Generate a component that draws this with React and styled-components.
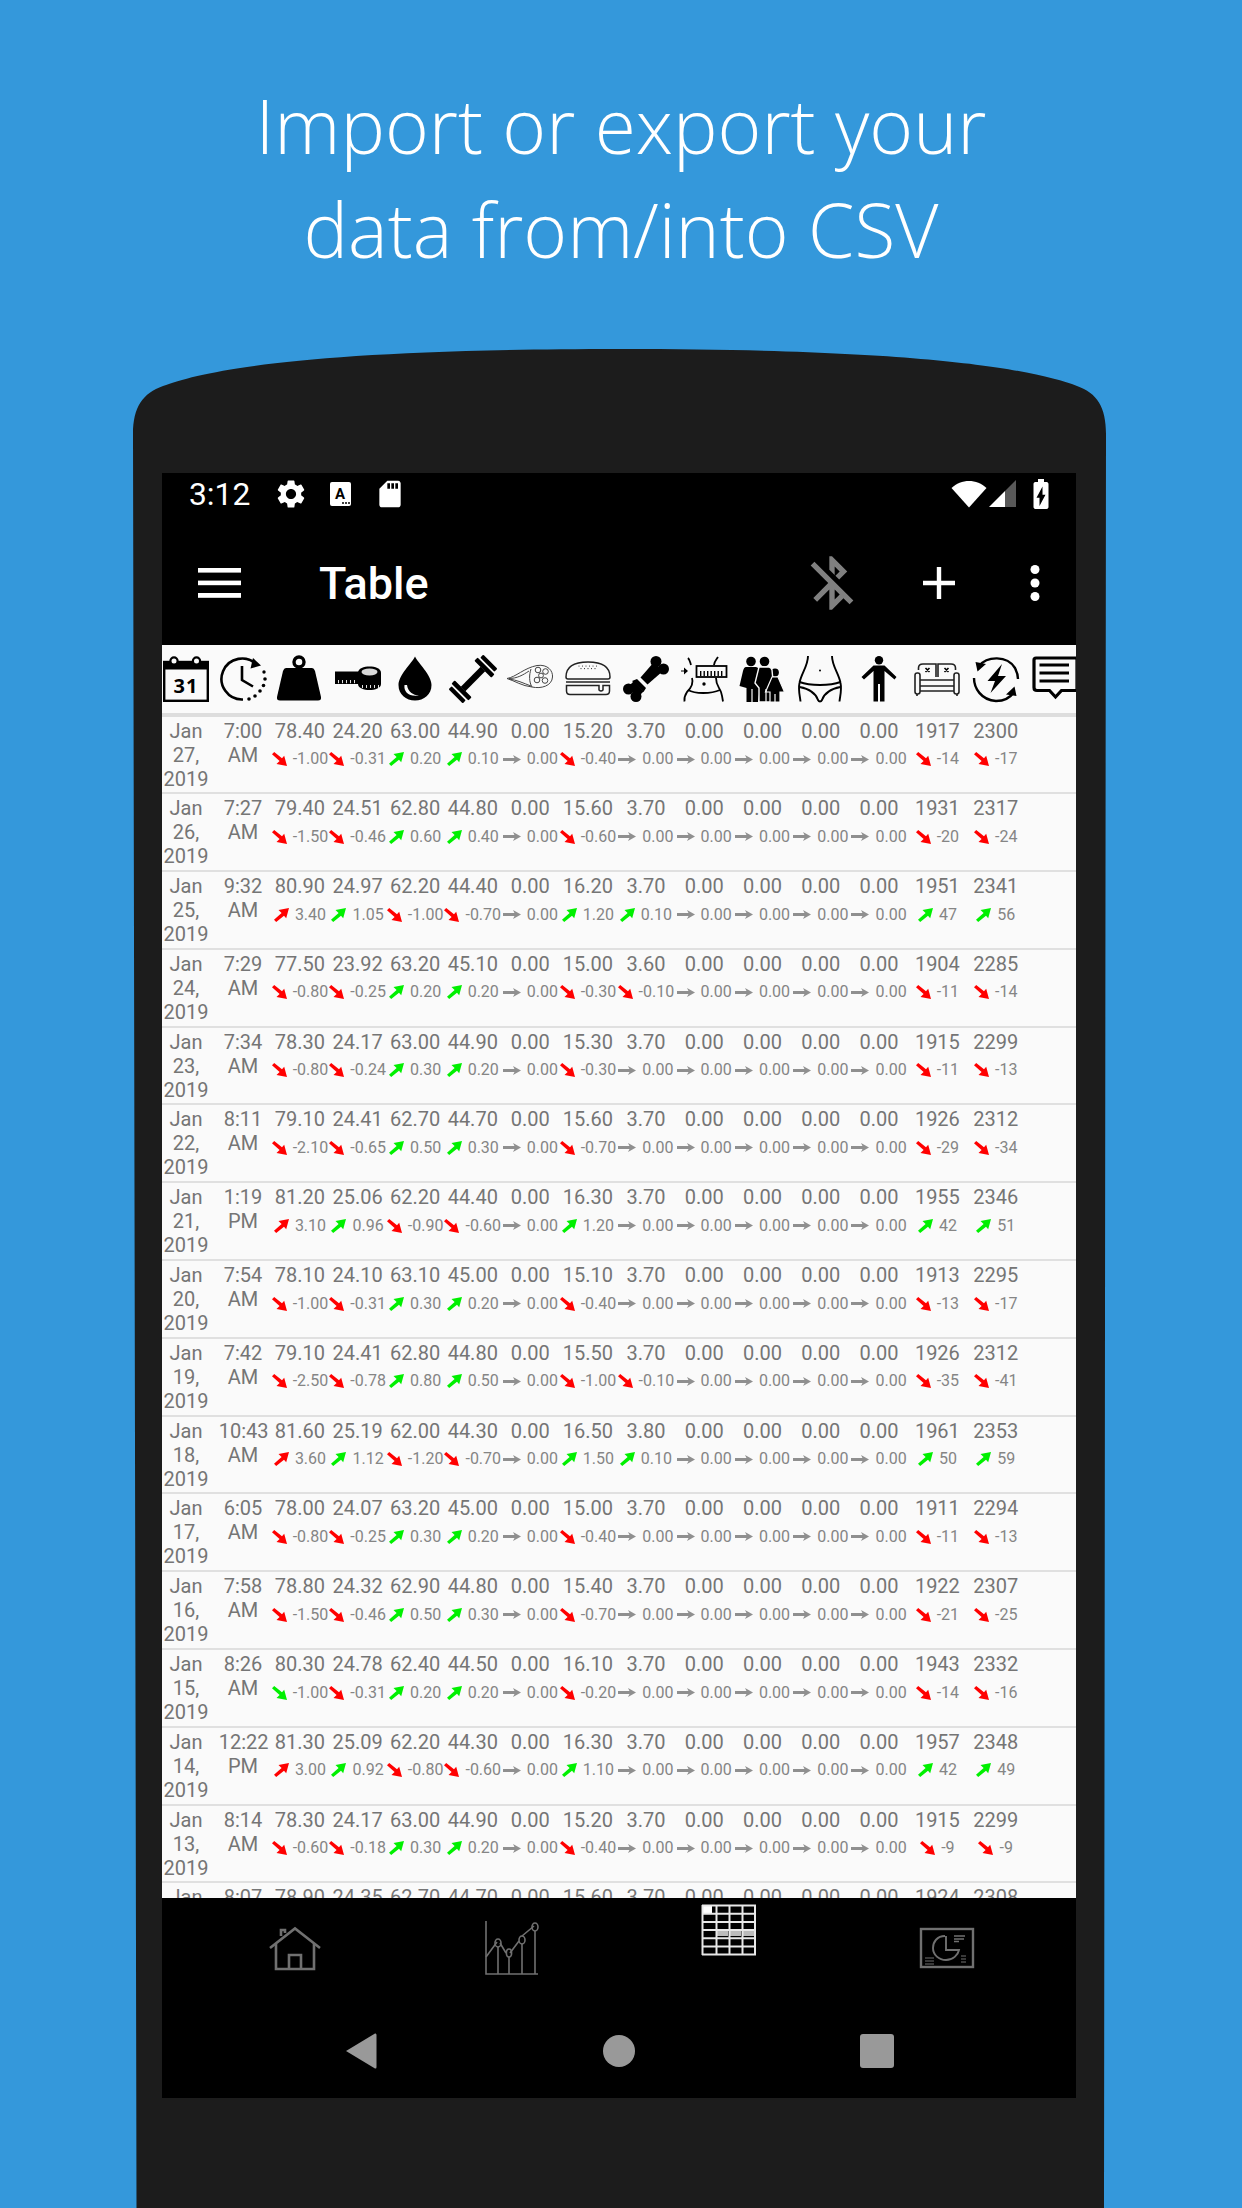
import React from 'react';
import styled, { createGlobalStyle } from 'styled-components';
import { MdSettings, MdSdStorage, MdBluetoothDisabled, MdBatteryChargingFull } from 'react-icons/md';

const GlobalStyle = createGlobalStyle`
  html, body { margin: 0; padding: 0; background: #3498db; }
  body { font-family: Roboto, "Liberation Sans", sans-serif; }
`;

const COLUMNS = '57.6px 56.4px repeat(6, 57.6px) repeat(8, 58.3px)';

const Page = styled.div`
  width: 1242px; height: 2208px; background: #3498db; overflow: hidden;
  display: flex; flex-direction: column;
`;
const Heading = styled.h1`
  margin: 0; height: 349px; box-sizing: border-box; padding-top: 74px; flex: none;
  font-family: "Open Sans", sans-serif; font-weight: 300; font-size: 74.8px; line-height: 103.5px;
  color: #fff; text-align: center;
`;
const Phone = styled.div`
  flex: none; width: 973px; height: 1859px; margin-left: 133px; padding: 124px 0 0 29px; box-sizing: border-box;
  background: #1c1c1c;
  clip-path: path('M0 85 C0 58 10 44 30 37 C70 22 170 0 487 0 C804 0 904 22 944 37 C964 44 973 58 973 85 L971 1859 L3.5 1859 Z');
`;
const Screen = styled.div`
  width: 913.5px; height: 1625px; background: #000; display: flex; flex-direction: column; overflow: hidden;
`;
const StatusBar = styled.div`
  flex: none; height: 48px; display: flex; align-items: center; padding: 0 17px 7px 27px; box-sizing: border-box; color: #fff;
`;
const Clock = styled.span`
  font-size: 31.8px; line-height: 40px; width: 85px;
`;
const StatusLeft = styled.div`display: flex; align-items: center; gap: 22px;`;
const StatusRight = styled.div`margin-left: auto; display: flex; align-items: center; gap: 2px;`;
const BatteryIcon = styled(MdBatteryChargingFull)`margin-left: 5px;`;
const AppBar = styled.div`
  flex: none; height: 124px; display: flex; align-items: center; color: #fff; padding: 0 36px 0 36px;
`;
const Title = styled.span`
  font-size: 45px; font-weight: 500; margin-left: 78px; margin-top: 1px;
`;
const Actions = styled.div`
  margin-left: auto; display: flex; align-items: center;
`;
const BluetoothIcon = styled(MdBluetoothDisabled)`margin-right: 59px;`;
const PlusSlot = styled.div`margin-right: 75px;`;
const TableArea = styled.div`
  flex: 1; min-height: 0; background: #fafafa; overflow: hidden;
`;
const HeaderRow = styled.div`
  display: grid; grid-template-columns: ${COLUMNS}; margin-left: -4.8px; height: 68px; align-items: center;
  justify-items: center; background: #fafafa;
`;
const HeaderRule = styled.div`height: 3.5px; background: #dddddd;`;
const Row = styled.div`
  display: grid; grid-template-columns: ${COLUMNS}; margin-left: -4.8px; height: 77.8px; box-sizing: border-box;
  padding-top: 2px; border-bottom: 2.6px solid #e0e0e0;
`;
const TextCell = styled.div`
  font-size: 20px; line-height: 24px; color: #757575; text-align: center; padding: 0 4px;
`;
const ValueCell = styled.div`
  display: flex; flex-direction: column; align-items: center; color: #757575;
`;
const Value = styled.div`font-size: 20px; line-height: 24px; white-space: nowrap;`;
const Delta = styled.div`
  display: flex; align-items: center; gap: 6px; font-size: 16px; line-height: 20px; margin-top: 6.5px; color: #858585; white-space: nowrap;
`;
const Tabs = styled.div`
  flex: none; height: 112px; display: grid; grid-template-columns: repeat(4, 217.3px); padding-left: 24px; justify-items: center;
`;
const Tab = styled.div`padding-top: ${p => p.$top}px;`;
const Keys = styled.div`
  flex: none; height: 88px; box-sizing: border-box; padding: 0 0 6px 70px; display: flex; align-items: center;
`;
const Key = styled.div`
  width: 258px; display: flex; justify-content: center;
`;
const KeyCircle = styled.div`width: 32px; height: 32px; border-radius: 50%; background: #999;`;
const KeySquare = styled.div`width: 34px; height: 34px; border-radius: 3px; background: #999;`;

const Svg = styled.svg`display: block; flex: none; overflow: visible;`;
const ArrowSvg = styled(Svg)`transform: ${p => (p.$up ? 'scaleY(-1)' : 'none')};`;

const Ico = ({ children }) => (
  <Svg width={46} height={46} viewBox="0 0 46 46">{children}</Svg>
);

const Calendar = () => (
  <Ico>
    <rect x="1.2" y="6" width="43.6" height="38.8" fill="#fafafa" stroke="#000" strokeWidth="2.4" />
    <rect x="1" y="5" width="44" height="8.5" fill="#000" />
    <circle cx="11" cy="5" r="3.6" fill="#fafafa" stroke="#000" strokeWidth="2.2" />
    <circle cx="33.5" cy="5" r="3.6" fill="#fafafa" stroke="#000" strokeWidth="2.2" />
    <rect x="5" y="15.5" width="36" height="25" fill="#fafafa" />
    <text x="23" y="37" textAnchor="middle" fontFamily="'Open Sans', sans-serif" fontWeight="700" fontSize="20" letterSpacing="1" fill="#000">31</text>
  </Ico>
);
const ClockIcon = () => (
  <Ico>
    <path d="M37 9 A20.5 20.5 0 1 0 23 43.5" fill="none" stroke="#000" strokeWidth="2.6" />
    <path d="M33 2 L41 9.5 L30.5 12.5 Z" fill="#000" />
    <path d="M22 10 V24 L33 30.5" fill="none" stroke="#000" strokeWidth="2.6" />
    {[[44, 16, 1.7], [45, 23, 1.8], [43.5, 29.5, 1.8], [40, 35, 1.8], [35, 40, 1.8], [29, 43, 1.8]].map(([x, y, r]) => <circle key={x + '-' + y} cx={x} cy={y} r={r} fill="#000" />)}
  </Ico>
);
const Kettle = () => (
  <Ico>
    <circle cx="22" cy="6" r="5" fill="none" stroke="#000" strokeWidth="3.4" />
    <path d="M9 12 H35 Q37 12 38 15 L44 41 Q44.5 44.5 41 44.5 H3 Q-0.5 44.5 0 41 L6 15 Q7 12 9 12 Z" fill="#000" />
  </Ico>
);
const Tape = () => (
  <Ico>
    <rect x="0" y="15.5" width="24" height="12.5" fill="#000" />
    {[3, 7, 11, 15, 19].map(x => <rect key={x} x={x} y="24" width="0.9" height="3.2" fill="#fafafa" />)}
    <path d="M23 17 C23 12 29 10.5 34.5 10.5 C40 10.5 46 12 46 17 V28 C46 32 40 34 34.5 34 C29 34 23 32 23 28 Z" fill="#000" />
    <ellipse cx="34.5" cy="16" rx="8" ry="3.4" fill="#d8d8d8" />
    {[27, 31, 35, 39, 43].map(x => <rect key={x} x={x} y="29" width="0.9" height="3" fill="#fafafa" />)}
  </Ico>
);
const Drop = () => (
  <Ico>
    <path d="M23 0.5 C26 7 39.5 19 39.5 29 C39.5 38.5 32 44.5 23 44.5 C14 44.5 6.5 38.5 6.5 29 C6.5 19 20 7 23 0.5 Z" fill="#000" />
    <path d="M12.5 29 C11.5 36 17 41 27 39.5 C21 39 16 36 15 29 Z" fill="#fafafa" />
  </Ico>
);
const Dumbbell = () => (
  <Ico>
    <g transform="rotate(-45 23 23)">
      <rect x="-1.5" y="13" width="4.3" height="20" rx="1" fill="#000" />
      <rect x="4.5" y="11" width="4.6" height="24" rx="1" fill="#000" />
      <rect x="9" y="19.8" width="28" height="6.4" fill="#000" />
      <rect x="36.9" y="11" width="4.6" height="24" rx="1" fill="#000" />
      <rect x="43.2" y="13" width="4.3" height="20" rx="1" fill="#000" />
    </g>
  </Ico>
);
const Meat = () => (
  <Ico>
    <g fill="none" stroke="#444" strokeWidth="1">
      <path d="M0 22.5 C9 21 17 12 30 9.5 C41 8 46 15 45.5 21 C45 30 34 33 25 31 C15 30 8 25 0 22.5 Z" />
      <path d="M2 22.5 C10 22.5 16 19 22 15" />
      <path d="M2 23 C10 24 16 27 24 30" />
      <path d="M24 13 C22 19 22 26 25 31" />
      <circle cx="31" cy="14" r="2.8" /><circle cx="38.5" cy="15.5" r="2.8" /><circle cx="30" cy="24" r="2.8" /><circle cx="38" cy="24.5" r="2.8" /><circle cx="34" cy="19.5" r="2.4" />
    </g>
  </Ico>
);
const Burger = () => (
  <Ico>
    <g fill="none" stroke="#222" strokeWidth="1.5">
      <path d="M1 21 C1 10 10 6 23 6 C36 6 45 10 45 21 C45 22.5 44 23 43 23 H3 C2 23 1 22.5 1 21 Z" />
      <path d="M1 26 H45" />
      <path d="M1.5 29.5 H34 V34 Q36 36 38 34 V29.5 H44.5 V35 Q44.5 38.5 41 38.5 H5 Q1.5 38.5 1.5 35 Z" />
    </g>
    {[14, 17.5, 21, 24.5, 28, 31.5].map(x => <circle key={x} cx={x} cy="10" r=".55" fill="#222" />)}
    {[16, 19.5, 23, 26.5, 30].map(x => <circle key={x} cx={x} cy="12.6" r=".55" fill="#222" />)}
  </Ico>
);
const Bone = () => (
  <Ico>
    <g fill="#000">
      <circle cx="33" cy="5.5" r="5.5" /><circle cx="40.5" cy="13" r="5.5" />
      <circle cx="5.5" cy="33" r="5.5" /><circle cx="13" cy="40.5" r="5.5" />
      <path d="M31 6 L40 15 L24.5 28.5 L17.5 21.5 Z" />
      <path d="M5 31 L10.5 25.5 L20.5 35.5 L15 41 Z" />
      <path d="M9 25 L14 23 L23 32 L20.5 36 Z" />
    </g>
  </Ico>
);
const Belly = () => (
  <Ico>
    <path d="M0 14.5 H3 V11.5 L7 15 L3 18.5 V15.5 H0 Z" fill="#000" />
    <g fill="none" stroke="#000" strokeWidth="1.8">
      <path d="M7 2 C9 4 9 6 10 9 M11 22 C13 28 9 33 6 36 C4 39 3 42 3.5 45.5" />
      <path d="M37 1 C35 4 33 6 33 9 M35 22 C35 29 38 31 40 36 C41 39 41.5 42 42 45.5" />
      <path d="M7 34 C14 38 30 38 39 34" />
      <rect x="15.5" y="10" width="30" height="11" />
    </g>
    {[19, 22.5, 26, 29.5, 33, 36.5, 40].map(x => <rect key={x} x={x} y="15" width="1.4" height="5" fill="#000" />)}
    <circle cx="23" cy="28" r="1.7" fill="#000" />
  </Ico>
);
const Family = () => (
  <Ico>
    <g fill="#000">
      <circle cx="12" cy="5.5" r="4.8" /><circle cx="25.5" cy="5.5" r="4.8" /><circle cx="36" cy="16.5" r="3.9" />
      <path d="M7 11 H17 Q19 11 20 14 L21 30 L19 46 H7.5 V32 L4 31 L0.5 30 L4 15 Q5 11 7 11 Z" />
      <path d="M20 11 H30 Q32 11 33 14 L34.5 30 V46 H20 V32 L16 27 Z" stroke="#fafafa" strokeWidth="1.4" />
      <path d="M33 21 H39 L45.5 36 H41 V46 H31 V36 H26.5 Z" stroke="#fafafa" strokeWidth="1.2" />
    </g>
    <g stroke="#fafafa" strokeWidth="1.2">
      <path d="M13 33 V46" /><path d="M27 33 V46" /><path d="M36 38 V46" />
    </g>
  </Ico>
);
const Torso = () => (
  <Ico>
    <g fill="none" stroke="#000" strokeWidth="1.9">
      <path d="M10 0 C10 10 3 18 1.5 27 C0 34 2 40 2.5 45.5" />
      <path d="M34 0 C34 10 41 18 42.5 27 C44 34 42 40 41.5 45.5" />
      <path d="M1.5 26 C12 30 32 30 42.5 26" />
      <path d="M1.5 31 C12 33 18 38 20 44 C21 46 23 46 24 44 C26 38 32 33 42.5 31" />
    </g>
    <circle cx="22" cy="14.5" r="1" fill="#000" />
  </Ico>
);
const Person = () => (
  <Ico>
    <circle cx="23" cy="4.2" r="4.2" fill="#000" />
    <path d="M17.5 9.5 H28.5 L40.5 21 L38.5 23.5 L28.5 15 V27 L28.5 45.5 H24 V28 H22 V45.5 H17.5 V15 L8 23.5 L5.5 21 Z" fill="#000" />
  </Ico>
);
const Sofa = () => (
  <Ico>
    <g fill="none" stroke="#222" strokeWidth="1.6">
      <path d="M4.5 14 V12 Q4.5 8 9 8 H22 V21" />
      <path d="M41.5 14 V12 Q41.5 8 37 8 H24 V21" />
      <path d="M6 24 H40 M6 30 H40 M6 35 H40" />
      <rect x="1" y="17" width="5" height="21" rx="2.2" />
      <rect x="40" y="17" width="5" height="21" rx="2.2" />
      <path d="M3 38 V40 M43 38 V40" />
    </g>
    <path d="M11.5 12 L15.5 16 M15.5 12 L11.5 16 M30.5 12 L34.5 16 M34.5 12 L30.5 16" stroke="#000" strokeWidth="1.6" />
  </Ico>
);
const Bolt = () => (
  <Ico>
    <g fill="none" stroke="#000" strokeWidth="2.4">
      <path d="M6 10 C14 0 34 -1 42 12 C44 16 45 19 45 23" />
      <path d="M1 22 C1 32 8 44 23 45 C31 45 37 42 41 36" />
    </g>
    <path d="M2.5 6 L13 8 L4.5 15.5 Z M43.5 40 L33 38.5 L41.5 30.5 Z" fill="#000" />
    <path d="M29 8 L14.5 25 H22 L17.5 37 L33 20 H25 Z" fill="#000" />
  </Ico>
);
const Comment = () => (
  <Ico>
    <path d="M5 2 H46 V34.5 H30.5 L24.5 41 L18.5 34.5 H6 Q3 34.5 3 31.5 V4 Q3 2 5 2 Z" fill="none" stroke="#000" strokeWidth="3.2" />
    <path d="M8.5 9 H38 M8.5 17 H38 M8.5 25 H38" stroke="#000" strokeWidth="3.2" />
  </Ico>
);

const ICONS = [Calendar, ClockIcon, Kettle, Tape, Drop, Dumbbell, Meat, Burger, Bone, Belly, Family, Torso, Person, Sofa, Bolt, Comment];

const Arrow = ({ color, up }) => (
  <ArrowSvg $up={up} width="15" height="14" viewBox="0 0 15 14">
    <path d="M0 2.2 L2.2 0 L10 6.3 L12.2 3.8 L15 14 L4.5 12 L7.6 9 Z" fill={color} />
  </ArrowSvg>
);
const Flat = () => (
  <Svg width="18" height="9" viewBox="0 0 18 9">
    <path d="M0 3 H11.5 L10 0 L18 4.5 L10 9 L11.5 6 H0 Z" fill="#8f8f8f" />
  </Svg>
);

const DeltaMark = ({ d, green }) => {
  const n = parseFloat(d);
  if (n === 0) return <Flat />;
  return <Arrow up={n > 0} color={green ? '#00f000' : '#ff0000'} />;
};

const RAW = [
  ['Jan 27, 2019', '7:00 AM', '78.40 -1.00|24.20 -0.31|63.00 0.20|44.90 0.10|15.20 -0.40|3.70 0.00|1917 -14|2300 -17'],
  ['Jan 26, 2019', '7:27 AM', '79.40 -1.50|24.51 -0.46|62.80 0.60|44.80 0.40|15.60 -0.60|3.70 0.00|1931 -20|2317 -24'],
  ['Jan 25, 2019', '9:32 AM', '80.90 3.40|24.97 1.05|62.20 -1.00|44.40 -0.70|16.20 1.20|3.70 0.10|1951 47|2341 56'],
  ['Jan 24, 2019', '7:29 AM', '77.50 -0.80|23.92 -0.25|63.20 0.20|45.10 0.20|15.00 -0.30|3.60 -0.10|1904 -11|2285 -14'],
  ['Jan 23, 2019', '7:34 AM', '78.30 -0.80|24.17 -0.24|63.00 0.30|44.90 0.20|15.30 -0.30|3.70 0.00|1915 -11|2299 -13'],
  ['Jan 22, 2019', '8:11 AM', '79.10 -2.10|24.41 -0.65|62.70 0.50|44.70 0.30|15.60 -0.70|3.70 0.00|1926 -29|2312 -34'],
  ['Jan 21, 2019', '1:19 PM', '81.20 3.10|25.06 0.96|62.20 -0.90|44.40 -0.60|16.30 1.20|3.70 0.00|1955 42|2346 51'],
  ['Jan 20, 2019', '7:54 AM', '78.10 -1.00|24.10 -0.31|63.10 0.30|45.00 0.20|15.10 -0.40|3.70 0.00|1913 -13|2295 -17'],
  ['Jan 19, 2019', '7:42 AM', '79.10 -2.50|24.41 -0.78|62.80 0.80|44.80 0.50|15.50 -1.00|3.70 -0.10|1926 -35|2312 -41'],
  ['Jan 18, 2019', '10:43 AM', '81.60 3.60|25.19 1.12|62.00 -1.20|44.30 -0.70|16.50 1.50|3.80 0.10|1961 50|2353 59'],
  ['Jan 17, 2019', '6:05 AM', '78.00 -0.80|24.07 -0.25|63.20 0.30|45.00 0.20|15.00 -0.40|3.70 0.00|1911 -11|2294 -13'],
  ['Jan 16, 2019', '7:58 AM', '78.80 -1.50|24.32 -0.46|62.90 0.50|44.80 0.30|15.40 -0.70|3.70 0.00|1922 -21|2307 -25'],
  ['Jan 15, 2019', '8:26 AM', '80.30 -1.00|24.78 -0.31|62.40 0.20|44.50 0.20|16.10 -0.20|3.70 0.00|1943 -14|2332 -16', true],
  ['Jan 14, 2019', '12:22 PM', '81.30 3.00|25.09 0.92|62.20 -0.80|44.30 -0.60|16.30 1.10|3.70 0.00|1957 42|2348 49'],
  ['Jan 13, 2019', '8:14 AM', '78.30 -0.60|24.17 -0.18|63.00 0.30|44.90 0.20|15.20 -0.40|3.70 0.00|1915 -9|2299 -9'],
  ['Jan 12, 2019', '8:07 AM', '78.90 0.60|24.35 0.18|62.70 -0.30|44.70 -0.20|15.60 0.40|3.70 0.00|1924 9|2308 9'],
];

const ZERO = { v: '0.00', d: '0.00' };
const buildCells = (s) => {
  const c = s.split('|').map(x => { const [v, d] = x.split(' '); return { v, d }; });
  return [c[0], c[1], c[2], c[3], ZERO, c[4], c[5], ZERO, ZERO, ZERO, ZERO, c[6], c[7]];
};

const Wifi = () => (
  <Svg width="36" height="28" viewBox="0 0 36 28"><path d="M0.5 8 C10 -1.5 26 -1.5 35.5 8 L18 27.5 Z" fill="#fff" /></Svg>
);
const Signal = () => (
  <Svg width="27" height="27" viewBox="0 0 27 27">
    <path d="M0 27 L16 11 V27 Z" fill="#fff" /><path d="M16 11 L27 0 V27 H16 Z" fill="#595959" />
  </Svg>
);
const AIcon = () => (
  <Svg width="22" height="24" viewBox="0 0 22 24">
    <rect width="21" height="24" rx="2" fill="#fff" />
    <text x="10" y="17" textAnchor="middle" fontFamily="Roboto, sans-serif" fontWeight="700" fontSize="15" fill="#000">A</text>
    <circle cx="13" cy="21" r="1" fill="#000" /><circle cx="16" cy="21" r="1" fill="#000" /><circle cx="19" cy="21" r="1" fill="#000" />
  </Svg>
);
const Hamburger = () => (
  <Svg width="43" height="30" viewBox="0 0 43 30">
    <rect y="0" width="43" height="4.6" fill="#fff" /><rect y="12.6" width="43" height="4.6" fill="#fff" /><rect y="25" width="43" height="4.8" fill="#fff" />
  </Svg>
);
const Plus = () => (
  <Svg width="32" height="32" viewBox="0 0 32 32">
    <path d="M16 0 V32 M0 16 H32" stroke="#fff" strokeWidth="4.4" />
  </Svg>
);
const Dots = () => (
  <Svg width="10" height="36" viewBox="0 0 10 36">
    <circle cx="5" cy="4.5" r="4.5" fill="#fff" /><circle cx="5" cy="18" r="4.5" fill="#fff" /><circle cx="5" cy="31.5" r="4.5" fill="#fff" />
  </Svg>
);

const HomeTab = () => (
  <Svg width="52" height="44" viewBox="0 0 52 44">
    <g fill="none" stroke="#707070" strokeWidth="2.6">
      <path d="M1 21 L26 1.5 L51 21" />
      <path d="M12 9 V3 H16 V6" />
      <path d="M7 17 V42 H45 V17" />
      <path d="M20 42 V28 H32 V42" />
    </g>
  </Svg>
);
const ChartTab = () => (
  <Svg width="54" height="54" viewBox="0 0 54 54">
    <g fill="none" stroke="#707070" strokeWidth="1.6">
      <path d="M1 0 V53 H53" />
      <path d="M1 36 L12 21 M15 22 L21 32 M25 32 L34 20 M37 15 L49 5" />
      <ellipse cx="13" cy="22" rx="3" ry="4" /><ellipse cx="24" cy="32" rx="2.6" ry="4" /><ellipse cx="37" cy="19" rx="3" ry="4" /><ellipse cx="50" cy="6" rx="3" ry="4" />
      <path d="M13 26 V53 M24 36 V53 M37 23 V53 M50 10 V53" />
    </g>
  </Svg>
);
const TableTab = () => {
  const rows = [0, 8.2, 16.4, 24.6, 32.8, 41, 49];
  const cols = [0, 14, 27, 40, 54];
  return (
    <Svg width="54" height="50" viewBox="0 0 54 50">
      <rect x="1" y="1" width="9" height="8" fill="#fff" />
      {[15, 28, 41].map(x => <rect key={x} x={x} y="26" width="11" height="5" fill="#bbb" />)}
      <g stroke="#e8e8e8" strokeWidth="2">
        {rows.map(y => <path key={y} d={`M0 ${y + 0.5} H54`} />)}
        {cols.map(x => <path key={x} d={`M${Math.min(x + 0.5, 53)} 0 V50`} />)}
      </g>
    </Svg>
  );
};
const PieTab = () => (
  <Svg width="54" height="40" viewBox="0 0 54 40">
    <g fill="none" stroke="#707070">
      <rect x="1" y="1" width="52" height="38" strokeWidth="2.4" />
      <path d="M25 8 C17 8 13 14 13 20 C13 27 19 32 26 32 C33 32 38 27 39 22 H26 V8" strokeWidth="1.9" />
      <path d="M34 8 H45 M34 11 H44 M34 13.5 H39" strokeWidth="1.3" />
      <path d="M5 30 H14 M5 33 H14 M5 36 H14" strokeWidth="1.2" />
      <path d="M41 28 H46 M41 31 H46 M41 34 H46" strokeWidth="1.2" />
    </g>
  </Svg>
);
const BackKey = () => (
  <Svg width="32" height="36" viewBox="0 0 32 36">
    <path d="M1 18 L30 0.5 Q31.5 0 31.5 2 V34 Q31.5 36 30 35.5 Z" fill="#999" />
  </Svg>
);

const DataRow = ({ date, time, cells, greenFirst }) => (
  <Row>
    <TextCell>{date}</TextCell>
    <TextCell>{time}</TextCell>
    {cells.map((c, i) => {
      const n = parseFloat(c.d);
      const green = i === 0 ? !!greenFirst : n > 0;
      return (
        <ValueCell key={i}>
          <Value>{c.v}</Value>
          <Delta><DeltaMark d={c.d} green={green} /><span>{c.d}</span></Delta>
        </ValueCell>
      );
    })}
  </Row>
);

export default function App() {
  return (
    <Page>
      <GlobalStyle />
      <Heading>Import or export your<br />data from/into CSV</Heading>
      <Phone>
        <Screen>
          <StatusBar>
            <Clock>3:12</Clock>
            <StatusLeft>
              <MdSettings size={34} />
              <AIcon />
              <MdSdStorage size={32} />
            </StatusLeft>
            <StatusRight>
              <Wifi />
              <Signal />
              <BatteryIcon size={36} />
            </StatusRight>
          </StatusBar>
          <AppBar>
            <Hamburger />
            <Title>Table</Title>
            <Actions>
              <BluetoothIcon size={64} color="#808080" />
              <PlusSlot><Plus /></PlusSlot>
              <Dots />
            </Actions>
          </AppBar>
          <TableArea>
            <HeaderRow>
              {ICONS.map((I, i) => <I key={i} />)}
            </HeaderRow>
            <HeaderRule />
            {RAW.map(r => (
              <DataRow key={r[0]} date={r[0]} time={r[1]} cells={buildCells(r[2])} greenFirst={r[3]} />
            ))}
          </TableArea>
          <Tabs>
            <Tab $top={29}><HomeTab /></Tab>
            <Tab $top={23}><ChartTab /></Tab>
            <Tab $top={7}><TableTab /></Tab>
            <Tab $top={30}><PieTab /></Tab>
          </Tabs>
          <Keys>
            <Key><BackKey /></Key>
            <Key><KeyCircle /></Key>
            <Key><KeySquare /></Key>
          </Keys>
        </Screen>
      </Phone>
    </Page>
  );
}
